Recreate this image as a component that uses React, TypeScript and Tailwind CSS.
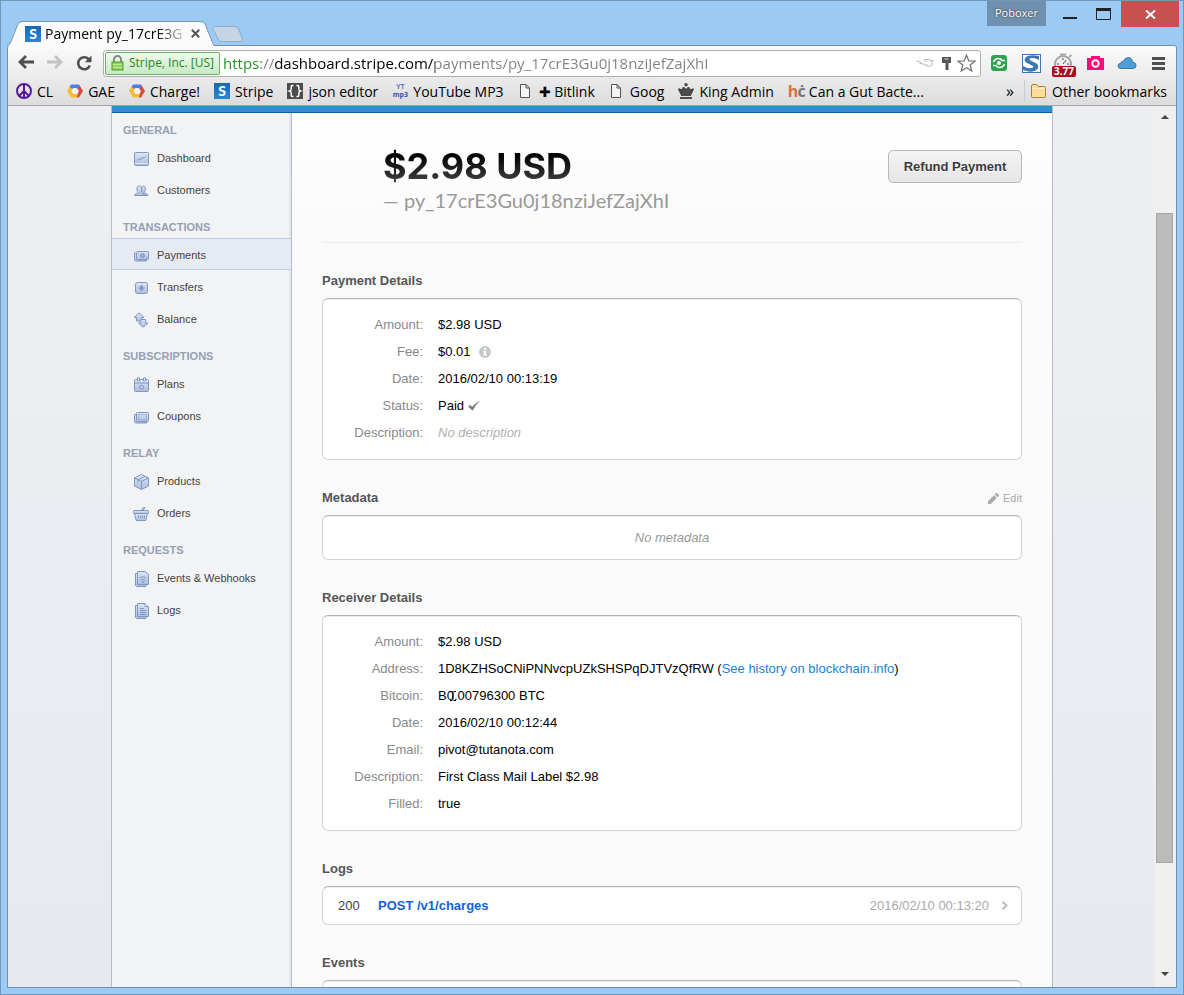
import type { ReactNode } from 'react'
import { FaChessQueen } from 'react-icons/fa'

/* ---------- sidebar icons ---------- */

const LINE = '#7f98c3'
const FILL = 'url(#nav-fill)'

function NavIcon({ children }: { children: ReactNode }) {
  return (
    <svg width="16" height="16" viewBox="0 0 16 16" fill={FILL} stroke={LINE} aria-hidden="true" className="shrink-0">
      {children}
    </svg>
  )
}

const navIcons: Record<string, ReactNode> = {
  Dashboard: (
    <>
      <rect x="1.500" y="1.500" width="14" height="13" rx="1" />
      <path d="M4 9.500 6 7.500 7.500 9 9.500 6 10.500 7.500 12.500 5.500" fill="none" />
      <path d="M2 12.500h13" stroke="#dbe4f1" />
    </>
  ),
  Customers: (
    <>
      <path d="M8 12.500c0-1 2.500-1.500 2.500-2.500C9 8.500 8.500 6.500 8.700 4.800 9 2.500 12 2.500 12.300 4.800c.2 1.700-.3 3.500-1.100 4.700 0 1 3.800 1.200 3.800 3z" />
      <path d="M1.500 12.500c0-2 3.500-2 3.500-3.200C4 8 3.800 6.500 4 4.800c.4-2.600 4.300-2.600 4.700 0 .2 1.700-.1 3.200-1 4.500 0 1.200 4.300 1.200 4.300 3.200z" />
    </>
  ),
  Payments: (
    <>
      <path d="M3 5H1.500v6.500l1 1.500H13.500v-1" />
      <rect x="3.500" y="3.500" width="12" height="8" rx="1" />
      <circle cx="9.500" cy="7.500" r="2" fill="#9db1d4" />
      <path d="M5 5.500h1M13 9.500h1" />
    </>
  ),
  Transfers: (
    <>
      <rect x="2.500" y="2.500" width="12" height="11" rx="2" />
      <path d="M7 5.500h3v2h2l-3.500 3.500L5 7.500h2z" fill={LINE} stroke="none" />
    </>
  ),
  Balance: (
    <>
      <path d="M6 .8 11 5.500H8.800V9H3.500V5.500H1z" />
      <path d="M10 15.200 5.500 11H7.700V7.500h5V11H15z" />
    </>
  ),
  Plans: (
    <>
      <rect x="1.500" y="2.500" width="14" height="12" rx="1" />
      <path d="M2 6h13" />
      <path d="M4.500.8h2v3h-2zM10.500.8h2v3h-2z" fill="#f1f3f5" />
      <circle cx="8.500" cy="10.200" r="2" fill="none" />
    </>
  ),
  Coupons: (
    <>
      <path d="M3 5.500H1.500v7l1 1.500h11v-1.500" />
      <rect x="3.500" y="3.500" width="12" height="9" rx="1" />
      <rect x="5.500" y="5.500" width="8" height="5" strokeDasharray="1 1" fill="none" />
    </>
  ),
  Products: (
    <>
      <path d="M8.500.5 15.500 4v8l-7 3.500-7-3.500V4z" />
      <path d="M1.500 4l7 3.300 7-3.300M8.500 7.300v8M5 5.700 12 2.300M5 5.700v2.500" fill="none" />
    </>
  ),
  Orders: (
    <>
      <path d="M7.500 5 11 1l1 .800L9 5" />
      <path d="M1.500 7.500h13L12.800 14.500H3.200z" />
      <rect x=".5" y="4.500" width="15" height="3" rx=".8" />
      <path d="M5.500 9.500v2.500M7.500 9.500v2.500M9.500 9.500v2.500M11.500 9.500v2.500" />
    </>
  ),
  'Events & Webhooks': (
    <>
      <path d="M4.500 2.500h-2v12l1 1H13V13.500" />
      <path d="M4.500.5H12l3.500 3v10h-11z" />
      <path d="M6.500 7.200c2-1.800 5-1.800 7 0M7.800 9.200c1.300-1 3-1 4.300 0" fill="none" />
      <circle cx="10" cy="11" r="1" fill={LINE} stroke="none" />
    </>
  ),
  Logs: (
    <>
      <path d="M4.500 2.500h-2v12l1 1H13V13.500" />
      <path d="M4.500.5H12l3.500 3v10h-11z" />
      <path d="M12 .5v3h3.500" fill="#fff" />
      <path d="M7 5.500h4M7 7.500h6M7 9.500h6M7 11.500h6" />
    </>
  ),
}

const navSections = [
  { title: 'General', items: ['Dashboard', 'Customers'] },
  { title: 'Transactions', items: ['Payments', 'Transfers', 'Balance'] },
  { title: 'Subscriptions', items: ['Plans', 'Coupons'] },
  { title: 'Relay', items: ['Products', 'Orders'] },
  { title: 'Requests', items: ['Events & Webhooks', 'Logs'] },
]

function Sidebar() {
  return (
    <nav className="w-[180px] shrink-0 border-r border-[#b5bccb] bg-[#f1f3f5] pt-[9px] shadow-[inset_-2px_0_0_#e3e6ea]">
      <svg width="0" height="0" className="absolute" aria-hidden="true">
        <linearGradient id="nav-fill" x1="0" y1="0" x2="0" y2="1">
          <stop offset="0" stopColor="#dce6f4" />
          <stop offset="1" stopColor="#adbddb" />
        </linearGradient>
      </svg>
      {navSections.map((section) => (
        <section key={section.title} className="mb-[14px]">
          <h2 className="mb-[3px] pl-[11px] text-[11px] leading-4 font-bold text-[#97a0b2] uppercase">
            {section.title}
          </h2>
          <ul>
            {section.items.map((item) => (
              <li key={item}>
                <a
                  href="#"
                  className={`flex h-8 items-center gap-2 border-y pt-[3px] pl-[21px] text-[11px] text-[#444] ${
                    item === 'Payments' ? 'border-[#b8cde6] bg-[#e6ebf3]' : 'border-transparent'
                  }`}
                >
                  <NavIcon>{navIcons[item]}</NavIcon>
                  {item}
                </a>
              </li>
            ))}
          </ul>
        </section>
      ))}
    </nav>
  )
}

/* ---------- payment page ---------- */

function Section({ title, action, children }: { title: string; action?: ReactNode; children: ReactNode }) {
  return (
    <section>
      <div className="flex items-center justify-between pt-[29px] pb-2">
        <h3 className="text-[13px] leading-[18px] font-bold text-[#555]">{title}</h3>
        {action}
      </div>
      <div className="rounded-md border border-[#d5d5d5] border-t-[#b5b5b5] bg-white shadow-[inset_0_1px_1px_#eee]">
        {children}
      </div>
    </section>
  )
}

function Details({ rows }: { rows: [string, ReactNode][] }) {
  return (
    <dl className="pt-3 pb-[13px] text-[13px] leading-[27px]">
      {rows.map(([label, value]) => (
        <div key={label} className="flex gap-[15px]">
          <dt className="w-[100px] text-right text-[#888]">{label}:</dt>
          <dd className="flex items-center text-black">{value}</dd>
        </div>
      ))}
    </dl>
  )
}

function InfoIcon() {
  return (
    <svg width="12" height="12" viewBox="0 0 12 12" className="ml-2" aria-hidden="true">
      <circle cx="6" cy="6" r="6" fill="#c8c8c8" />
      <path d="M5 2h2.200v1.800H5zM4.300 4.800H7v3.400h.8v1.300H4.300V8.200H5V6h-.7z" fill="#fff" />
    </svg>
  )
}

function CheckIcon() {
  return (
    <svg width="12" height="10" viewBox="0 0 12 10" className="ml-1" aria-hidden="true">
      <path d="M.3 5.500 2 4 4.200 6.100C6.300 3.300 8.800 1.300 12 .1 9 2.800 6.500 5.800 4.500 9.800z" fill="#777" />
    </svg>
  )
}

const paymentRows: [string, ReactNode][] = [
  ['Amount', '$2.98 USD'],
  ['Fee', <>$0.01<InfoIcon /></>],
  ['Date', '2016/02/10 00:13:19'],
  ['Status', <>Paid<CheckIcon /></>],
  ['Description', <em className="text-[#b0b0b0]">No description</em>],
]

const receiverRows: [string, ReactNode][] = [
  ['Amount', '$2.98 USD'],
  [
    'Address',
    <span>
      1D8KZHSoCNiPNNvcpUZkSHSPqDJTVzQfRW (
      <a href="#" className="text-[#1b7fd8]">See history on blockchain.info</a>)
    </span>,
  ],
  [
    'Bitcoin',
    <span className="relative">
      B0.00796300 BTC
      {/* text cursor resting on the amount */}
      <svg width="7" height="10" viewBox="0 0 7 10" className="absolute top-[9px] left-3" aria-hidden="true">
        <path d="M0 .5h2.500M3.500.5H6M0 9.500h2.500M3.500 9.500H6M3 1v8" stroke="#000" fill="none" />
      </svg>
    </span>,
  ],
  ['Date', '2016/02/10 00:12:44'],
  ['Email', 'pivot@tutanota.com'],
  ['Description', 'First Class Mail Label $2.98'],
  ['Filled', 'true'],
]

function PaymentPage() {
  return (
    <main className="min-w-0 flex-1 bg-[#fafafa] bg-[linear-gradient(#fff,#fafafa_120px)] px-[30px]">
      <header className="flex h-[130px] items-start justify-between border-b border-[#ececec] pt-8 pl-[61px]">
        <div>
          <h1 className="bg-linear-to-b from-[#000] to-[#505050] bg-clip-text font-[Inter,sans-serif] text-[36px] leading-[42px] font-bold text-transparent">
            $2.98 USD
          </h1>
          <p className="font-[Lato,sans-serif] text-[20px] leading-[26px] text-[#999]">— py_17crE3Gu0j18nziJefZajXhI</p>
        </div>
        <button
          type="button"
          className="mt-[5px] h-[33px] w-[134px] rounded-[5px] border border-[#b9b9b9] bg-linear-to-b from-[#f3f3f3] to-[#e6e6e6] text-[13px] font-bold text-[#3a3a3e] [text-shadow:0_1px_0_#fff]"
        >
          Refund Payment
        </button>
      </header>

      <Section title="Payment Details">
        <Details rows={paymentRows} />
      </Section>

      <Section
        title="Metadata"
        action={
          <button type="button" className="flex items-center gap-1 text-[11px] leading-[18px] text-[#aaa]">
            <svg width="11" height="11" viewBox="0 0 11 11" fill="#aaa" aria-hidden="true">
              <path d="M0 11V8.200L6 2.200 8.800 5 2.800 11zM6.800 1.400 8 .3q.8-.6 1.500 0l1.200 1.200q.6.8 0 1.500L9.600 4.200z" />
            </svg>
            Edit
          </button>
        }
      >
        <p className="text-center text-[13px] leading-[43px] text-[#999] italic">No metadata</p>
      </Section>

      <Section title="Receiver Details">
        <Details rows={receiverRows} />
      </Section>

      <Section title="Logs">
        <div className="flex h-[37px] items-center pr-3 pl-[15px] text-[13px]">
          <span className="w-10 text-[#444]">200</span>
          <a href="#" className="font-bold text-[#1064d8]">POST /v1/charges</a>
          <time className="ml-auto text-[#aaa]">2016/02/10 00:13:20</time>
          <svg width="8" height="9" viewBox="0 0 8 9" className="ml-3" aria-hidden="true">
            <path d="M1.500.8 5.500 4.500 1.500 8.200" stroke="#bbb" strokeWidth="2" fill="none" />
          </svg>
        </div>
      </Section>

      <Section title="Events">
        <div className="h-[37px]" />
      </Section>
    </main>
  )
}

/* ---------- browser chrome ---------- */

function StripeFavicon() {
  return (
    <span className="flex size-4 shrink-0 items-center justify-center bg-linear-to-b from-[#1a66b8] to-[#2488d4] font-[Lato,sans-serif] text-[14px] leading-4 font-black text-white">
      S
    </span>
  )
}

function CloudHexIcon() {
  return (
    <svg width="16" height="16" viewBox="0 0 16 16" aria-hidden="true">
      <path d="M4 1.500h8l1.800 3-3.300 2L9.500 5h-3L5 6.500 2.200 4.500z" fill="#4a7fe8" />
      <path d="M12.500 2.500 16 8l-4 6.500H9.500L11 10l1-2-1.700-2z" fill="#dc4a3b" />
      <path d="M2.500 4 5.500 6 4.500 8 6.500 11h4l-1 3.500H4L0 8z" fill="#f6bd2a" />
      <circle cx="8" cy="8" r="3" fill="#f2f2f2" />
    </svg>
  )
}

function PageIcon() {
  return (
    <svg width="16" height="16" viewBox="0 0 16 16" fill="#f4f4f4" stroke="#555" aria-hidden="true">
      <path d="M2.500 1.500H8L11.500 5v9.500h-9zM8 1.500V5h3.500" />
    </svg>
  )
}

const bookmarks: { label: string; icon: ReactNode }[] = [
  {
    label: 'CL',
    icon: (
      <svg width="16" height="16" viewBox="0 0 16 16" fill="none" stroke="#551a9b" strokeWidth="2" aria-hidden="true">
        <circle cx="8" cy="8" r="7" />
        <path d="M8 1v14M8 8l-5 5M8 8l5 5" />
      </svg>
    ),
  },
  { label: 'GAE', icon: <CloudHexIcon /> },
  { label: 'Charge!', icon: <CloudHexIcon /> },
  { label: 'Stripe', icon: <StripeFavicon /> },
  {
    label: 'json editor',
    icon: (
      <svg width="16" height="16" viewBox="0 0 16 16" aria-hidden="true">
        <rect width="16" height="16" fill="#4c4c4c" />
        <path
          d="M6.500 2.500H5.200q-1 0-1 1.200v2.300q0 1.500-1.700 2 1.700.5 1.700 2v2.300q0 1.200 1 1.200h1.300M9.500 2.500h1.300q1 0 1 1.200v2.300q0 1.500 1.700 2-1.700.5-1.700 2v2.300q0 1.200-1 1.200H9.500"
          stroke="#fff"
          strokeWidth="1.500"
          fill="none"
        />
      </svg>
    ),
  },
  {
    label: 'YouTube MP3',
    icon: (
      <span className="flex w-4 flex-col items-center text-[7px] leading-[8px] font-bold text-[#3350b0]">
        <span className="text-[#5b78d8]">YT</span>
        <span>mp3</span>
      </span>
    ),
  },
  { label: '✚ Bitlink', icon: <PageIcon /> },
  { label: 'Goog', icon: <PageIcon /> },
  { label: 'King Admin', icon: <FaChessQueen size={16} color="#4a4a4a" /> },
  {
    label: 'Can a Gut Bacte...',
    icon: (
      <span className="w-4 text-[16px] leading-4 font-bold tracking-tighter text-[#e07040]">
        h<span className="text-[#777]">ċ</span>
      </span>
    ),
  },
]

function TitleBar() {
  return (
    <div className="flex h-11 shrink-0 justify-between pr-1 pl-[6px]">
      <div className="flex items-end">
        <div className="relative z-10 -mb-px flex h-[25px] w-[207px] items-center">
          <svg width="207" height="25" viewBox="0 0 207 25" className="absolute inset-0" aria-hidden="true">
            <path d="M0 25q3-.5 4-3.500L10.500 4.500Q11.500 1 15 1H194q3.500 0 4.500 3.500L205 21q1 3 2 4z" fill="#fbfbfb" />
            <path d="M0 24q3-.5 4-3.500L10.500 4Q11.500.5 15 .5H194q3.500 0 4.500 3.500L205 20.500q1 3 2 3.500" fill="none" stroke="#7c97b2" />
          </svg>
          <div className="relative flex w-full items-center gap-1 pl-[18px]">
            <StripeFavicon />
            <span className="w-[142px] overflow-hidden text-[14px] whitespace-nowrap text-black [mask-image:linear-gradient(to_right,#000_110px,transparent_146px)]">
              Payment py_17crE3G
            </span>
            <button type="button" aria-label="Close tab">
              <svg width="9" height="9" viewBox="0 0 9 9" stroke="#555" strokeWidth="2" aria-hidden="true">
                <path d="M.8.8l7.400 7.400M8.200.8.8 8.200" />
              </svg>
            </button>
          </div>
        </div>
        <button type="button" aria-label="New tab" className="-ml-[2px] mb-[2px]">
          <svg width="32" height="17" viewBox="0 0 32 17" aria-hidden="true">
            <path d="M2.500.5H23q2.500 0 3.500 2.500l4 10q1 2.500-1.500 2.500H9q-2 0-3-2.500L1 2.500Q.5.5 2.500.5z" fill="#c6d5e5" stroke="#8fabc6" />
          </svg>
        </button>
      </div>

      <div className="flex items-start">
        <button type="button" className="h-[25px] w-[59px] bg-[#6f90ae] text-[11px] text-white [text-shadow:0_0_2px_#222]">
          Poboxer
        </button>
        <button type="button" aria-label="Minimize" className="ml-[17px] pt-4">
          <svg width="14" height="3" aria-hidden="true">
            <path d="M0 1h14" stroke="#222" strokeWidth="2" />
          </svg>
        </button>
        <button type="button" aria-label="Maximize" className="ml-[19px] pt-[7px]">
          <svg width="15" height="12" aria-hidden="true">
            <path d="M.5 1v10.500h14V1" stroke="#222" fill="none" />
            <path d="M0 1.500h15" stroke="#222" strokeWidth="3" />
          </svg>
        </button>
        <button type="button" aria-label="Close" className="ml-[10px] flex h-[26px] w-[58px] items-center justify-center bg-[#c75050]">
          <svg width="11" height="9" viewBox="0 0 11 9" stroke="#fff" strokeWidth="2" aria-hidden="true">
            <path d="M1 .5l9 8M10 .5l-9 8" />
          </svg>
        </button>
      </div>
    </div>
  )
}

function ToolButton({ label, children }: { label: string; children: ReactNode }) {
  return (
    <button type="button" aria-label={label} className="flex w-5 shrink-0 justify-center">
      {children}
    </button>
  )
}

function Toolbar() {
  return (
    <div className="flex h-[34px] shrink-0 items-center pr-[7px] pl-2">
      <div className="flex gap-[9px]">
        <ToolButton label="Back">
          <svg width="16" height="14" viewBox="0 0 16 14" fill="none" stroke="#4f4f4f" strokeWidth="2.800" aria-hidden="true">
            <path d="M16 7H3M8 1 2 7l6 6" />
          </svg>
        </ToolButton>
        <ToolButton label="Forward">
          <svg width="16" height="14" viewBox="0 0 16 14" fill="none" stroke="#c2c2c2" strokeWidth="2.800" aria-hidden="true">
            <path d="M0 7h13M8 1l6 6-6 6" />
          </svg>
        </ToolButton>
        <ToolButton label="Reload">
          <svg width="16" height="16" viewBox="0 0 16 16" aria-hidden="true">
            <path d="M12.500 4A6 6 0 1 0 13.800 10.500" fill="none" stroke="#4f4f4f" strokeWidth="2.600" />
            <path d="M15.500.5v6.700H8.800z" fill="#4f4f4f" />
          </svg>
        </ToolButton>
      </div>

      <div className="ml-[9px] flex h-[27px] min-w-0 flex-1 items-center gap-[3px] rounded-[3px] border border-[#b0b0b0] bg-white pr-1 pl-px">
        <button
          type="button"
          className="flex h-[23px] shrink-0 items-center gap-[5px] rounded-[2px] border border-[#6db36d] bg-linear-to-b from-[#f0faee] to-[#c6e9c2] px-[5px] text-[12px] text-[#1e8a1e]"
        >
          <svg width="13" height="16" viewBox="0 0 13 16" aria-hidden="true">
            <path d="M3 8V4.500a3.500 3.500 0 0 1 7 0V8" fill="none" stroke="#8a8a8a" strokeWidth="2" />
            <rect x="1" y="7" width="11" height="8" fill="#93d45c" stroke="#4e9a2e" />
            <path d="M2 9.500h9M2 12.500h9" stroke="#b9e88e" />
          </svg>
          Stripe, Inc. [US]
        </button>
        <input
          type="text"
          aria-label="Address"
          defaultValue="https://dashboard.stripe.com/payments/py_17crE3Gu0j18nziJefZajXhI"
          className="min-w-0 flex-1 bg-[linear-gradient(to_right,#1e8f1e_38px,#808080_38px,#808080_52px,#000_52px,#000_212px,#808080_212px)] bg-clip-text text-[15px] text-transparent outline-none"
        />
        <svg width="20" height="14" viewBox="0 0 20 14" fill="none" stroke="#bbb" aria-hidden="true">
          <path d="M1 5q4 0 6 2.500Q10 10 13 9M4 7l3 1M9 4q3-1.500 6 0l4 1M12 10q3 1 5-1t-2-4M9 4l3 2" />
        </svg>
        <svg width="16" height="15" viewBox="0 0 16 15" aria-hidden="true">
          <path d="M4 1h9v6h-2.500v7h-3V7H4z" fill="#555" />
          <path d="M6.500 3h4" stroke="#ddd" />
        </svg>
        <button type="button" aria-label="Bookmark this page">
          <svg width="19" height="18" viewBox="0 0 19 18" fill="#fff" stroke="#777" strokeWidth="1.300" aria-hidden="true">
            <path d="M9.500 1.200 11.800 6.800 18 7.200 13.200 11 14.800 17 9.500 13.700 4.200 17 5.800 11 1 7.200 7.200 6.800z" />
          </svg>
        </button>
      </div>

      <div className="ml-2 flex items-center gap-3">
        <ToolButton label="Privacy">
          <svg width="16" height="16" viewBox="0 0 16 16" aria-hidden="true">
            <rect width="16" height="16" rx="3" fill="#2ca34e" />
            <path d="M2.500 7Q4 3.500 7.500 3.500 10 3.500 11 5.500H14M13.500 9Q12 12.500 8.500 12.500 6 12.500 5 10.500H2" stroke="#fff" strokeWidth="1.600" fill="none" />
            <circle cx="8" cy="8" r="2" fill="#fff" />
          </svg>
        </ToolButton>
        <ToolButton label="Session">
          <svg width="19" height="19" viewBox="0 0 19 19" aria-hidden="true">
            <rect x=".5" y=".5" width="18" height="18" fill="#fff" stroke="#3c79b4" />
            <path d="M17 2v4Q13 3.500 9.500 4t-1 2.500l6 3Q17.500 12 15.500 15q-3 3.500-9 2.500L1 16v-4q5 3 8.500 2t.5-2.500L4 8.500Q1.500 6 3.500 3.500 7 0 17 2z" fill="#3c79b4" />
          </svg>
        </ToolButton>
        <ToolButton label="Page load time">
          <span className="relative flex h-6 w-5 items-end justify-center">
            <svg width="20" height="22" viewBox="0 0 20 22" fill="none" aria-hidden="true">
              <circle cx="10" cy="11" r="8" fill="#eee" stroke="#a5a5a5" strokeWidth="2" />
              <path d="M10 11l3-4M10 5v2M4 11h2M14 11h2" stroke="#555" />
              <path d="M7 1.500h6M16 4l2.500-2" stroke="#aaa" strokeWidth="2" />
            </svg>
            <span className="absolute -right-[3px] -bottom-[2px] rounded-[2px] bg-[#b00a1c] px-[2px] text-[10px] leading-[11px] font-bold text-white">
              3.77
            </span>
          </span>
        </ToolButton>
        <ToolButton label="Screenshot">
          <svg width="17" height="14" viewBox="0 0 17 14" aria-hidden="true">
            <path d="M0 2h4V0h9v2h4v12H0z" fill="#ff0a78" />
            <circle cx="8.500" cy="7.500" r="3.200" fill="none" stroke="#fff" strokeWidth="2" />
          </svg>
        </ToolButton>
        <ToolButton label="Cloud">
          <svg width="20" height="14" viewBox="0 0 20 14" aria-hidden="true">
            <path d="M4 12.500Q1 12.500 1 10T4 7.200Q4 5 6.500 5.200 8 1.500 11.500 1.500T15.500 6Q19 6.500 19 9.500t-3 3z" fill="#4a9fd8" stroke="#44749a" />
          </svg>
        </ToolButton>
        <ToolButton label="Menu">
          <svg width="14" height="13" viewBox="0 0 14 13" stroke="#4f4f4f" strokeWidth="3" aria-hidden="true">
            <path d="M0 1.500h13M0 6.500h13M0 11.500h13" />
          </svg>
        </ToolButton>
      </div>
    </div>
  )
}

function BookmarksBar() {
  return (
    <div className="flex h-[26px] shrink-0 items-center border-b border-[#a6a6a6] pr-[9px] pb-[3px] pl-2 text-[14px] whitespace-nowrap text-black">
      <div className="flex min-w-0 flex-1 items-center gap-[14px]">
        {bookmarks.map((bookmark) => (
          <a key={bookmark.label} href="#" className="flex items-center gap-[5px]">
            {bookmark.icon}
            {bookmark.label}
          </a>
        ))}
      </div>
      <button type="button" aria-label="More bookmarks" className="mr-[10px] text-[16px]">»</button>
      <a href="#" className="flex h-[22px] items-center gap-[6px] border-l border-[#c6ccd2] pl-[6px]">
        <svg width="15" height="14" viewBox="0 0 15 14" aria-hidden="true">
          <path d="M.5 2q0-1.500 1.500-1.500h3.500L7 2.500h6.500q1 0 1 1v9q0 1-1 1h-12q-1 0-1-1z" fill="#fbdc98" stroke="#a5803f" />
          <path d="M1.500 4.500h12" stroke="#fff0cc" />
        </svg>
        Other bookmarks
      </a>
    </div>
  )
}

function Scrollbar() {
  return (
    <div className="flex w-[22px] shrink-0 flex-col items-center bg-[#f0f0f0] pt-[9px] pr-px pb-[11px]" aria-hidden="true">
      <svg width="8" height="4"><path d="M0 4 4 0l4 4z" fill="#444" /></svg>
      <div className="flex w-[17px] flex-1 flex-col pt-[94px] pb-[109px]">
        <div className="flex-1 border border-[#a6a6a6] bg-[#bbb]" />
      </div>
      <svg width="8" height="4"><path d="M0 0h8L4 4z" fill="#444" /></svg>
    </div>
  )
}

export default function App() {
  return (
    <div className="flex h-screen flex-col overflow-hidden border border-[#7397b6] bg-[#9bcbf4] font-['Open_Sans',sans-serif]">
      <TitleBar />
      <div className="mx-[6px] mb-[6px] flex min-h-0 flex-1 flex-col rounded-t-[3px] border border-[#6f8fac]">
        <div className="shrink-0 rounded-t-[2px] bg-linear-to-b from-[#fbfbfb] to-[#dcdcdc]">
          <Toolbar />
          <BookmarksBar />
        </div>
        <div className="flex min-h-0 flex-1">
          <div className="min-w-0 flex-1 overflow-hidden bg-linear-to-b from-[#eeeff3] to-[#e6eaef] pl-[2px] font-['Liberation_Sans',sans-serif]">
            <div className="mx-auto w-full max-w-[942px] border-x border-[#b9bcc1]">
              <div className="h-[7px] border-b border-[#0d5f9c] bg-[#2891d2]" />
              <div className="flex">
                <Sidebar />
                <PaymentPage />
              </div>
            </div>
          </div>
          <Scrollbar />
        </div>
      </div>
    </div>
  )
}
